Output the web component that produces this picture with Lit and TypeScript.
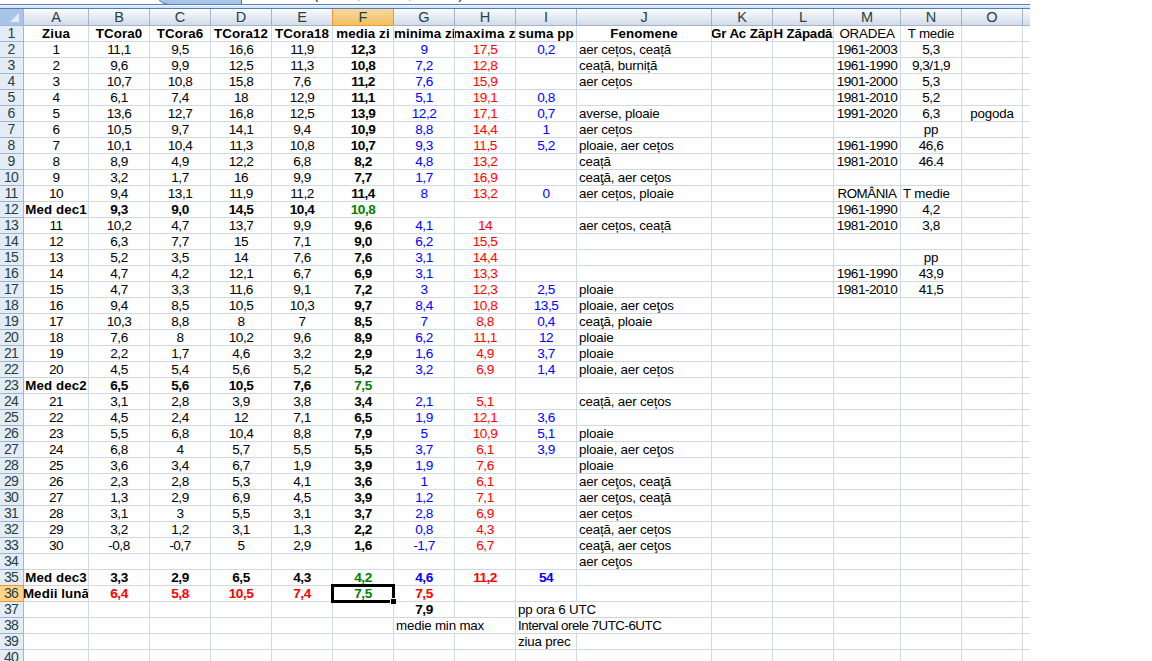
import { LitElement, html, css, nothing } from "lit";
import { customElement, property } from "lit/decorators.js";
import { classMap } from "lit/directives/class-map.js";

const COLUMNS = "ABCDEFGHIJKLMNO".split("");

// One line per sheet row; fields are columns A to O.
const SHEET = [
  "Ziua|TCora0|TCora6|TCora12|TCora18|media zi|minima zi|maxima zi|suma pp|Fenomene|Gr Ac Zăp|H Zăpadă|ORADEA|T medie",
  "1|11,1|9,5|16,6|11,9|12,3|9|17,5|0,2|aer cețos, ceață|||1961-2003|5,3",
  "2|9,6|9,9|12,5|11,3|10,8|7,2|12,8||ceață, burniță|||1961-1990|9,3/1,9",
  "3|10,7|10,8|15,8|7,6|11,2|7,6|15,9||aer cețos|||1901-2000|5,3",
  "4|6,1|7,4|18|12,9|11,1|5,1|19,1|0,8||||1981-2010|5,2",
  "5|13,6|12,7|16,8|12,5|13,9|12,2|17,1|0,7|averse, ploaie|||1991-2020|6,3|pogoda",
  "6|10,5|9,7|14,1|9,4|10,9|8,8|14,4|1|aer cețos||||pp",
  "7|10,1|10,4|11,3|10,8|10,7|9,3|11,5|5,2|ploaie, aer cețos|||1961-1990|46,6",
  "8|8,9|4,9|12,2|6,8|8,2|4,8|13,2||ceață|||1981-2010|46.4",
  "9|3,2|1,7|16|9,9|7,7|1,7|16,9||ceaţă, aer ceţos",
  "10|9,4|13,1|11,9|11,2|11,4|8|13,2|0|aer cețos, ploaie|||ROMÂNIA|T medie",
  "Med dec1|9,3|9,0|14,5|10,4|10,8|||||||1961-1990|4,2",
  "11|10,2|4,7|13,7|9,9|9,6|4,1|14||aer cețos, ceață|||1981-2010|3,8",
  "12|6,3|7,7|15|7,1|9,0|6,2|15,5",
  "13|5,2|3,5|14|7,6|7,6|3,1|14,4||||||pp",
  "14|4,7|4,2|12,1|6,7|6,9|3,1|13,3|||||1961-1990|43,9",
  "15|4,7|3,3|11,6|9,1|7,2|3|12,3|2,5|ploaie|||1981-2010|41,5",
  "16|9,4|8,5|10,5|10,3|9,7|8,4|10,8|13,5|ploaie, aer ceţos",
  "17|10,3|8,8|8|7|8,5|7|8,8|0,4|ceaţă, ploaie",
  "18|7,6|8|10,2|9,6|8,9|6,2|11,1|12|ploaie",
  "19|2,2|1,7|4,6|3,2|2,9|1,6|4,9|3,7|ploaie",
  "20|4,5|5,4|5,6|5,2|5,2|3,2|6,9|1,4|ploaie, aer cețos",
  "Med dec2|6,5|5,6|10,5|7,6|7,5",
  "21|3,1|2,8|3,9|3,8|3,4|2,1|5,1||ceață, aer cețos",
  "22|4,5|2,4|12|7,1|6,5|1,9|12,1|3,6",
  "23|5,5|6,8|10,4|8,8|7,9|5|10,9|5,1|ploaie",
  "24|6,8|4|5,7|5,5|5,5|3,7|6,1|3,9|ploaie, aer ceţos",
  "25|3,6|3,4|6,7|1,9|3,9|1,9|7,6||ploaie",
  "26|2,3|2,8|5,3|4,1|3,6|1|6,1||aer ceţos, ceaţă",
  "27|1,3|2,9|6,9|4,5|3,9|1,2|7,1||aer ceţos, ceaţă",
  "28|3,1|3|5,5|3,1|3,7|2,8|6,9||aer cețos",
  "29|3,2|1,2|3,1|1,3|2,2|0,8|4,3||ceață, aer cețos",
  "30|-0,8|-0,7|5|2,9|1,6|-1,7|6,7||ceaţă, aer ceţos",
  "|||||||||aer ceţos",
  "Med dec3|3,3|2,9|6,5|4,3|4,2|4,6|11,2|54",
  "Medii lună|6,4|5,8|10,5|7,4|7,5|7,5",
  "||||||7,9||pp ora 6 UTC",
  "||||||medie min max||Interval orele 7UTC-6UTC",
  "||||||||ziua prec",
  "",
].map((line) => line.split("|"));

const SPANS: Record<string, number> = { G38: 2, I37: 2, I38: 2 };
const LEFT = new Set(["N11", "G38", "I37", "I38", "I39"]);
const SUMMARY = new Set([12, 23, 35, 36]);

function look(col: string, row: number, text: string) {
  const id = col + row;
  const bold =
    (row === 1 && col < "M") ||
    (row > 1 && row < 37 && col === "F") ||
    (SUMMARY.has(row) && col < "J") ||
    id === "G37";
  const data = row > 1 && row < 37;
  const green = col === "F" && SUMMARY.has(row);
  const red = data && !green && (col === "H" || (row === 36 && col > "A"));
  const blue = data && !red && (col === "G" || col === "I");
  return {
    cell: true,
    bold,
    green,
    red,
    blue,
    left: LEFT.has(id) || (col === "J" && row > 1),
    word: /[a-zA-Z]/.test(text),
    caps: /7UTC|ROM/.test(text),
    flush: id === "G1",
    wide: id === "H1",
    tight: id === "K1" || id === "L1",
    active: id === "F36",
  };
}

@customElement("sheet-row")
export class SheetRow extends LitElement {
  @property({ type: Number }) row = 1;
  @property({ attribute: false }) values: string[] = [];

  static styles = css`
    :host {
      display: grid;
      grid-template-columns: var(--cols);
      height: 16px;
    }
    .head, .cell {
      box-sizing: border-box;
      height: 16px;
      display: flex;
      justify-content: center;
      white-space: pre;
      line-height: 15px;
      min-width: 0;
    }
    .head {
      background: #e4ecf7;
      border-right: 1px solid #9eb6ce;
      border-bottom: 1px solid #9eb6ce;
      color: #27413e;
      font-size: 14px;
      letter-spacing: -0.7px;
      padding-right: 1px;
    }
    .head.on {
      background: #ffd58d;
      border-color: #f29536;
      box-shadow: 0 -1px #f29536;
    }
    .cell {
      border-right: 1px solid #d0d7e5;
      border-bottom: 1px solid #d0d7e5;
      overflow: hidden;
      font-size: 13.6px;
      letter-spacing: -0.5px;
    }
    .word { font-size: 13.33px; letter-spacing: -0.18px; }
    .word.bold { letter-spacing: 0.1px; }
    .word.caps { letter-spacing: -0.48px; }
    .flush { justify-content: flex-start; }
    .word.wide { letter-spacing: 0.35px; justify-content: flex-start; }
    .wide span { margin-left: -2px; }
    .word.tight { letter-spacing: -0.15px; }
    .left { justify-content: flex-start; padding-left: 2px; }
    .bold { font-weight: 700; }
    .red { color: #f00; }
    .green { color: #008000; }
    .blue { color: #00f; }
    .active { overflow: visible; position: relative; }
    .frame {
      position: absolute;
      inset: -2px -2px -2px -2px;
      border: 3px solid #000;
    }
    .grip {
      position: absolute;
      right: -3px;
      bottom: -3px;
      width: 5px;
      height: 5px;
      background: #000;
      border-left: 1px solid #fff;
      border-top: 1px solid #fff;
      z-index: 1;
    }
  `;

  render() {
    const cells = [];
    for (let i = 0; i < COLUMNS.length; ) {
      const id = COLUMNS[i] + this.row;
      const span = SPANS[id] ?? 1;
      const text = this.values[i] ?? "";
      const classes = look(COLUMNS[i], this.row, text);
      cells.push(html`<div
        class=${classMap(classes)}
        style=${span > 1 ? `grid-column: span ${span}` : nothing}
      ><span>${text}</span>${classes.active
        ? html`<div class="frame"></div><div class="grip"></div>`
        : nothing}</div>`);
      i += span;
    }
    return html`<div class=${classMap({ head: true, on: this.row === 36 })}>${this.row}</div>
      ${cells}
      <div class="cell" style="border-right-width: 0"></div>`;
  }
}

@customElement("app-root")
export class AppRoot extends LitElement {
  static styles = css`
    :host {
      --cols: 24px 65px repeat(8, 61px) 135px 61px 61px 67px 61px 61px 7px;
      display: block;
      width: 1152px;
      height: 661px;
      overflow: hidden;
      background: #fff;
      color: #000;
      font-family: "Liberation Sans", Arial, sans-serif;
      font-size: 13px;
    }
    .sheet { width: 1030px; }
    .formula { display: flex; height: 4px; overflow: hidden; padding-left: 159px; }
    .tab { flex: none; width: 83px; height: 4px; }
    .expr {
      height: 2px;
      display: flex;
      align-items: flex-end;
      line-height: 15px;
      padding-left: 4px;
      letter-spacing: -0.18px;
    }
    .gap {
      height: 5px;
      box-sizing: border-box;
      border-top: 1px solid #567db1;
      border-bottom: 1px solid #567db1;
      background: linear-gradient(#f5f9ff 0 1px, #d5e4f6 1px);
    }
    .letters { display: grid; grid-template-columns: var(--cols); height: 17px; }
    .letter {
      box-sizing: border-box;
      height: 17px;
      border-right: 1px solid #9eb6ce;
      border-bottom: 1px solid #9eb6ce;
      background: linear-gradient(#f9fcfd, #d3dbe9);
      color: #27413e;
      font-size: 14.5px;
      line-height: 17px;
      text-align: center;
    }
    .letter.on {
      background: linear-gradient(#f9d99f, #f1c15f);
      border-color: #f29536;
      box-shadow: -1px 0 #f29536;
    }
    .letter.corner { background: #a9c4e9; }
    .last { border-right: 0; }
    .corner svg { display: block; }
  `;

  render() {
    return html`<div class="sheet">
      <div class="formula">
        <svg class="tab" viewBox="0 0 83 4">
          <path d="M0 0H83V4H8Q3 4 0 0Z" fill="#a9c4e9" />
          <path d="M0 0Q3 3.5 8 4M82.5 0V4" fill="none" stroke="#567db1" />
        </svg>
        <div class="expr">=AVERAGE(F2:F11,F13:F22,F24:F33)</div>
      </div>
      <div class="gap"></div>
      <div class="letters">
        <div class="letter corner">
          <svg width="23" height="16" viewBox="0 0 23 16">
            <path d="M19 4V13H10Z" fill="#e4ecf7" />
          </svg>
        </div>
        ${COLUMNS.map(
          (c) => html`<div class=${classMap({ letter: true, on: c === "F" })}>${c}</div>`
        )}
        <div class="letter last"></div>
      </div>
      ${SHEET.map((values, i) => html`<sheet-row .row=${i + 1} .values=${values}></sheet-row>`)}
    </div>`;
  }
}
